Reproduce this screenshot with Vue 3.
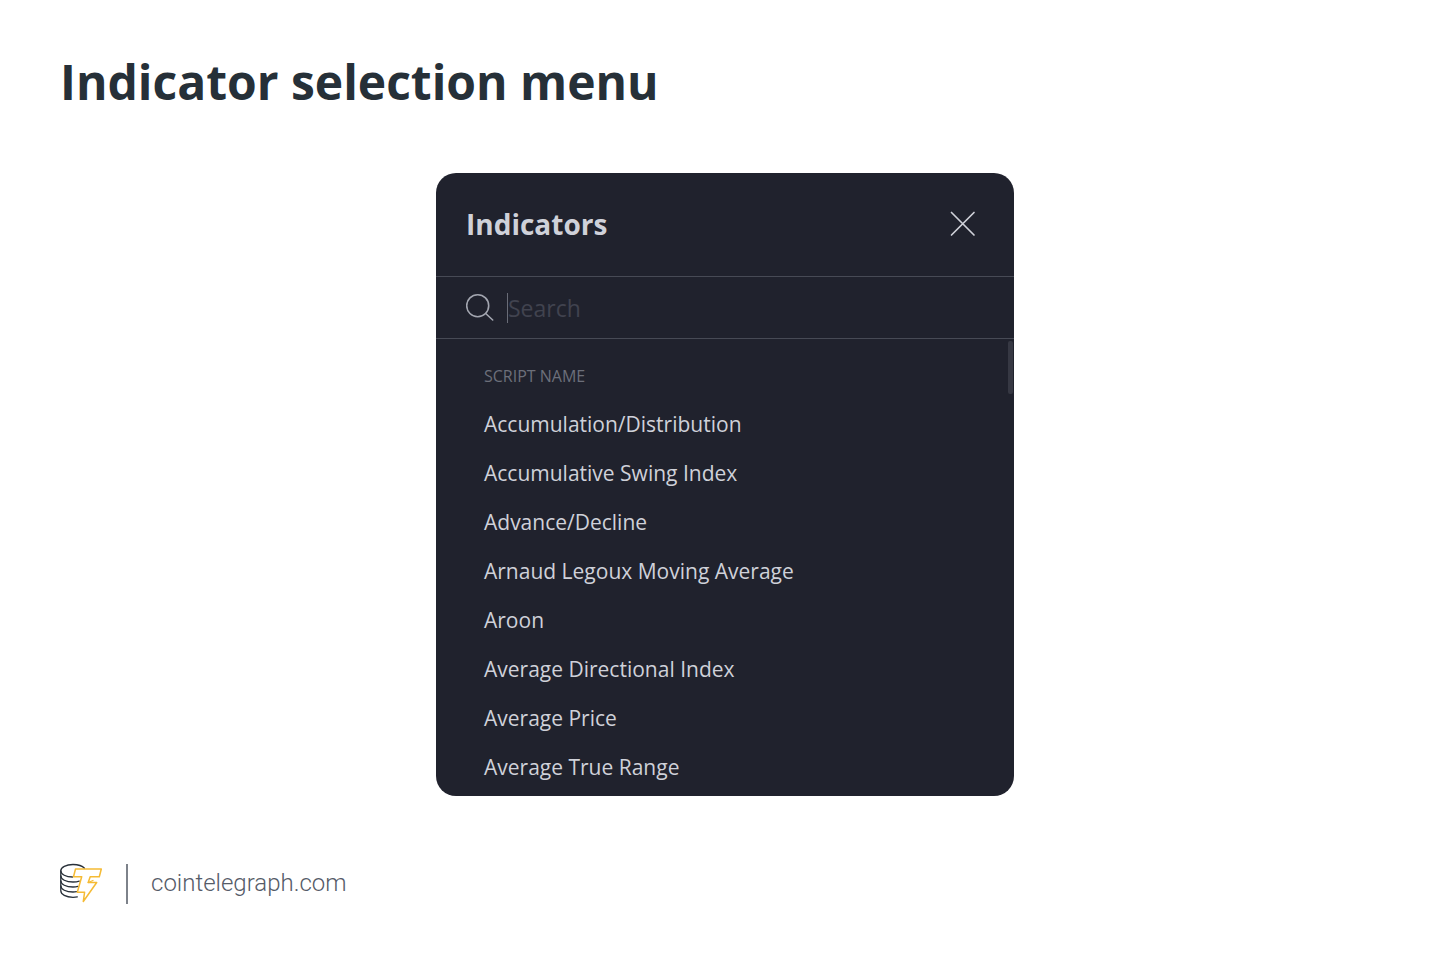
<script setup>
import { ref } from 'vue'

const query = ref('')
const indicators = [
  'Accumulation/Distribution',
  'Accumulative Swing Index',
  'Advance/Decline',
  'Arnaud Legoux Moving Average',
  'Aroon',
  'Average Directional Index',
  'Average Price',
  'Average True Range',
]
</script>

<template>
  <main class="page">
    <h1 class="title">Indicator selection menu</h1>

    <section class="panel" aria-labelledby="panel-title">
      <header class="panel-head">
        <h2 id="panel-title">Indicators</h2>
        <button type="button" class="close" aria-label="Close">
          <svg width="26" height="26" viewBox="0 0 26 26" fill="none" stroke="#cfd1d9" stroke-width="1.7" stroke-linecap="round">
            <path d="M1.500 1.500l22.500 22.500M24 1.500L1.500 24" />
          </svg>
        </button>
      </header>

      <label class="search">
        <svg width="30" height="30" viewBox="0 0 30 30" fill="none" stroke="#a3a6b0" stroke-width="1.6" stroke-linecap="round">
          <circle cx="11.700" cy="12.700" r="11" />
          <path d="M19.700 20.500l7 6.500" />
        </svg>
        <input v-model="query" type="text" placeholder="Search" aria-label="Search" />
      </label>

      <div class="body">
        <div class="results">
          <h3>SCRIPT NAME</h3>
          <ul>
            <li v-for="name in indicators" :key="name">
              <button type="button">{{ name }}</button>
            </li>
          </ul>
        </div>
        <div class="thumb"></div>
      </div>
    </section>

    <footer class="foot">
      <svg class="logo" width="44" height="42" viewBox="0 0 44 42" fill="none" stroke-linejoin="round" stroke-linecap="round">
        <g stroke="#283039" stroke-width="1.3">
          <path d="M24.500 5.300C22.500 3 18 1.500 13 1.500C6 1.500 .8 4.300 .8 7.800S6 14 12.500 14" />
          <path d="M.8 7.800v20C.8 31.500 6 34.300 13 34.300c1.600 0 3-.1 4.300-.4" />
          <path d="M.8 12.800C.8 16.300 6 19 13 19c2.500 0 4.500-.3 6.300-.9" />
          <path d="M.8 17.800C.8 21.300 6 24 13 24c1.800 0 3.500-.2 5-.6" />
          <path d="M.8 22.800C.8 26.300 6 29 13 29c1.200 0 2.400-.1 3.500-.3" />
        </g>
        <path d="M15.500 6H41.300L39.300 13.700H30.200L28.200 19.500H36.700L23.300 38.500L24.600 29.200H17.300L21.700 13.700H13.500Z" stroke="#f5bb35" stroke-width="1.5" />
        <path d="M28.200 19.500L33 17.500" stroke="#f5bb35" stroke-width="1.3" />
      </svg>
      <span class="divider"></span>
      <a href="#">cointelegraph.com</a>
    </footer>
  </main>
</template>

<style>
body {
  background: #fff;
}
</style>

<style scoped>
.page {
  box-sizing: border-box;
  min-height: 100vh;
  padding: 49px 60px 59px;
  display: flex;
  flex-direction: column;
  font-family: "Trebuchet MS", "Open Sans", sans-serif;
}

h1, h2, h3, ul {
  margin: 0;
  padding: 0;
}

.title {
  font: 700 48px/66px "Open Sans", sans-serif;
  color: #263038;
}

.panel {
  width: 100%;
  max-width: 578px;
  margin: 58px auto 0;
  border-radius: 20px;
  background: #20222d;
  overflow: hidden;
}

.panel-head {
  box-sizing: border-box;
  height: 104px;
  padding: 0 38px 2px 30px;
  display: flex;
  align-items: center;
  justify-content: space-between;
  border-bottom: 1px solid #474a55;
}

.panel-head h2 {
  font-size: 28px;
  line-height: 40px;
  font-weight: 700;
  color: #cfd1d9;
}

button {
  padding: 0;
  border: 0;
  background: none;
  font: inherit;
  color: inherit;
  cursor: pointer;
}

.close {
  display: flex;
}

.search {
  box-sizing: border-box;
  height: 62px;
  padding: 0 30px;
  display: flex;
  align-items: center;
  gap: 11px;
  border-bottom: 1px solid #474a55;
}

.search input {
  flex: 1;
  min-width: 0;
  height: 30px;
  padding: 0;
  border: 0;
  border-left: 1px solid #696c77;
  outline: 0;
  background: none;
  font: 400 23px/30px "Trebuchet MS", "Open Sans", sans-serif;
  color: #cfd1d9;
}

.search input::placeholder {
  color: #41434f;
  opacity: 1;
}

.body {
  display: flex;
  align-items: flex-start;
  justify-content: space-between;
}

.results {
  flex: 1;
  padding: 24px 20px 5px 48px;
}

.results h3 {
  font-size: 16px;
  line-height: 26px;
  font-weight: 400;
  color: #6c6f7a;
}

.results ul {
  padding-top: 10px;
  list-style: none;
}

.results li button {
  display: block;
  width: 100%;
  height: 49px;
  text-align: left;
  font-size: 21px;
  font-weight: 500;
  color: #cfd1d9;
}

.thumb {
  width: 5px;
  height: 53px;
  margin: 2px 1px 0 0;
  border-radius: 2px;
  background: #363843;
}

.foot {
  margin-top: auto;
  display: flex;
  align-items: center;
}

.divider {
  width: 2px;
  height: 40px;
  margin: 0 23px 0 22px;
  background: #7d828a;
}

.foot a {
  padding-bottom: 2px;
  font: 300 24px/32px Roboto, sans-serif;
  color: #555b68;
  text-decoration: none;
}
</style>
